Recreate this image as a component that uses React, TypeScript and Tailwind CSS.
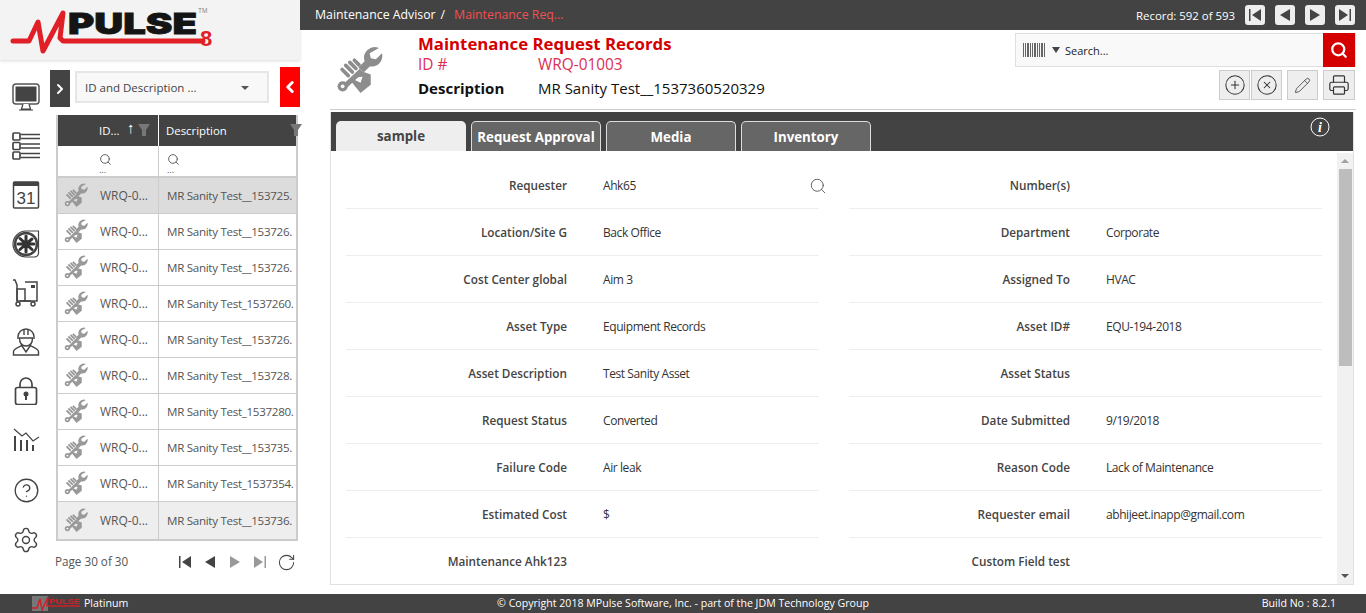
import { ChevronLeft, ChevronRight, CirclePlus, CircleX, CircleHelp, Pencil, Printer, RotateCw, Search, Settings } from 'lucide-react';

const font = { fontFamily: '"Open Sans", sans-serif' };

const listRows = [
  { id: 'WRQ-0...', desc: 'MR Sanity Test__153725.', bg: 'bg-[#dcdcdc]' },
  { id: 'WRQ-0...', desc: 'MR Sanity Test__153726.', bg: 'bg-white' },
  { id: 'WRQ-0...', desc: 'MR Sanity Test__153726.', bg: 'bg-white' },
  { id: 'WRQ-0...', desc: 'MR Sanity Test_1537260.', bg: 'bg-white' },
  { id: 'WRQ-0...', desc: 'MR Sanity Test__153726.', bg: 'bg-white' },
  { id: 'WRQ-0...', desc: 'MR Sanity Test__153728.', bg: 'bg-white' },
  { id: 'WRQ-0...', desc: 'MR Sanity Test_1537280.', bg: 'bg-white' },
  { id: 'WRQ-0...', desc: 'MR Sanity Test__153735.', bg: 'bg-white' },
  { id: 'WRQ-0...', desc: 'MR Sanity Test_1537354.', bg: 'bg-white' },
  { id: 'WRQ-0...', desc: 'MR Sanity Test__153736.', bg: 'bg-[#eeeeee]' },
];

const formRows = [
  ['Requester', 'Ahk65', 'Number(s)', ''],
  ['Location/Site G', 'Back Office', 'Department', 'Corporate'],
  ['Cost Center global', 'Aim 3', 'Assigned To', 'HVAC'],
  ['Asset Type', 'Equipment Records', 'Asset ID#', 'EQU-194-2018'],
  ['Asset Description', 'Test Sanity Asset', 'Asset Status', ''],
  ['Request Status', 'Converted', 'Date Submitted', '9/19/2018'],
  ['Failure Code', 'Air leak', 'Reason Code', 'Lack of Maintenance'],
  ['Estimated Cost', '$', 'Requester email', 'abhijeet.inapp@gmail.com'],
  ['Maintenance Ahk123', '', 'Custom Field test', ''],
];

// fist gripping a wrench, same mark in the list rows and the record header
function Wrench({ className }: { className?: string }) {
  return (
    <svg viewBox="0 0 46 46" className={className} fill="currentColor">
      <path d="M42 2a10.500 10.500 0 0 0-14 13L22 21l5 5 6-6a10.500 10.500 0 0 0 12-13l-6 6-5-1-1-5z" />
      <path d="M25 24L9 39" stroke="currentColor" strokeWidth="5" />
      <circle cx="6.500" cy="39.500" r="5" />
      <circle cx="6.500" cy="39.500" r="1.800" fill="#fff" />
      <g stroke="currentColor" strokeWidth="3.600" strokeLinecap="round">
        <path d="M6 23l6 6M9.500 19l6.500 6.500M13.500 16l6 6M18 14l4.500 4.500" />
      </g>
      <path d="M16 31l7-7 11 4v10l-10 8-9-11 3-2 6 3 2-6z" />
    </svg>
  );
}

function Logo() {
  return (
    <svg viewBox="0 0 225 60" className="w-[225px] h-[60px]">
      <path d="M13 41h16l9-19 5 29 20-38-3 25 3 3h140" fill="none" stroke="#e01f26" strokeWidth="5" strokeLinecap="round" strokeLinejoin="round" />
      <text x="68" y="34" textLength="129" lengthAdjust="spacingAndGlyphs" fontFamily="Inter" fontWeight="900" fontSize="29" fill="#141414" stroke="#141414" strokeWidth="0.800">PULSE</text>
      <text x="198" y="13" fontFamily="Liberation Sans" fontSize="6.500" fill="#888">TM</text>
      <text x="200" y="46" fontFamily="Liberation Sans" fontWeight="700" fontSize="22" fill="#e01f26">8</text>
    </svg>
  );
}

function MonitorIcon() {
  return (
    <svg viewBox="0 0 28 28" className="w-7 h-7">
      <rect x="1" y="1" width="26" height="20" rx="3" fill="#fff" stroke="#555" strokeWidth="1.500" />
      <rect x="3.500" y="3.500" width="21" height="15" fill="#444" />
      <path d="M11 21l-1.500 5h9L17 21M7 27h14" fill="#fff" stroke="#444" strokeWidth="1.200" />
    </svg>
  );
}

function ListIcon() {
  return (
    <svg viewBox="0 0 28 28" className="w-7 h-7" fill="none" stroke="#444" strokeWidth="1.700">
      <rect x="1" y="1" width="7" height="7" rx="1" />
      <rect x="1" y="10.500" width="7" height="7" rx="1" />
      <rect x="1" y="20" width="7" height="7" rx="1" />
      <path d="M9 2.500h19M9 6.500h19M9 12h19M9 16h19M9 21.500h19M9 25.500h19" />
    </svg>
  );
}

function CalendarIcon() {
  return (
    <svg viewBox="0 0 28 28" className="w-7 h-7">
      <rect x="1.500" y="1" width="25" height="26" rx="1" fill="#fff" stroke="#444" strokeWidth="1.500" />
      <rect x="1.500" y="1" width="25" height="4" fill="#444" />
      <text x="14" y="23" textAnchor="middle" fontFamily="Liberation Sans" fontSize="17" fill="#444">31</text>
    </svg>
  );
}

function FanIcon() {
  return (
    <svg viewBox="0 0 28 28" className="w-7 h-7">
      <path d="M14 1h12.500v22a4 4 0 0 1-4 4H14a13 13 0 0 1 0-26z" fill="#fff" stroke="#444" strokeWidth="1.200" />
      <circle cx="14" cy="14" r="11" fill="#fff" stroke="#444" strokeWidth="2.500" />
      <g stroke="#333" strokeWidth="3" strokeLinecap="round">
        <path d="M14 14V6M14 14l6-5M14 14h8M14 14l6 5.500M14 14v8M14 14l-6 5.500M14 14H6M14 14L8 8.500" />
      </g>
    </svg>
  );
}

function CartIcon() {
  return (
    <svg viewBox="0 0 28 28" className="w-7 h-7" fill="none" stroke="#444" strokeWidth="1.500">
      <path d="M1 1h2l2 5v16" />
      <path d="M5 10h8v12H5z" />
      <path d="M13 3h12v19H13" />
      <rect x="19" y="6" width="4" height="3" fill="#444" stroke="none" />
      <circle cx="6" cy="25" r="2" />
      <circle cx="21" cy="25" r="2" />
      <path d="M8 22h11" />
    </svg>
  );
}

function WorkerIcon() {
  return (
    <svg viewBox="0 0 28 28" className="w-7 h-7" fill="none" stroke="#444" strokeWidth="1.400">
      <path d="M6 9a8 8 0 0 1 16 0M5 10h18M12 2v5M16 2v5" />
      <path d="M7.500 10c0 5 2.500 8 6.500 8s6.500-3 6.500-8" />
      <path d="M10 17c-1 2-8 3-8.500 6.500V27h25v-3.500C26 20 19 19 18 17M10 18l4 6 4-6" />
    </svg>
  );
}

function LockIcon() {
  return (
    <svg viewBox="0 0 28 28" className="w-7 h-7" fill="none" stroke="#444" strokeWidth="1.700">
      <path d="M8 11V7a6 6 0 0 1 12 0v4" />
      <rect x="3.500" y="10.500" width="21" height="17" rx="2" />
      <circle cx="14" cy="17" r="2.500" fill="#444" stroke="none" />
      <rect x="13" y="18" width="2" height="5" fill="#444" stroke="none" />
    </svg>
  );
}

function TrendIcon() {
  return (
    <svg viewBox="0 0 28 28" className="w-7 h-7" fill="none" stroke="#444">
      <path d="M2 3l8 7 4-3 7 8 6-4" strokeWidth="1.200" />
      <path d="M3 10v15M9 14v11M15 14v11M21 19v6" strokeWidth="2" />
    </svg>
  );
}

function PagerIcon({ dir, bar, color }: { dir: 'left' | 'right'; bar?: boolean; color: string }) {
  return (
    <svg viewBox="0 0 14 14" className="w-[14px] h-[14px]" fill={color}>
      {dir === 'left'
        ? <path d={bar ? 'M13 1v12L4 7z' : 'M12 1v12L2 7z'} />
        : <path d={bar ? 'M1 1v12l9-6z' : 'M2 1v12l10-6z'} />}
      {bar && (dir === 'left' ? <rect x="1" y="1" width="1.500" height="12" /> : <rect x="11.500" y="1" width="1.500" height="12" />)}
    </svg>
  );
}

function RecordButton({ dir, bar }: { dir: 'left' | 'right'; bar?: boolean }) {
  return (
    <div className="w-5 h-5 bg-[#eeeeee] rounded-[3px] flex items-center justify-center">
      <PagerIcon dir={dir} bar={bar} color="#444" />
    </div>
  );
}

function ActionButton({ children, className }: { children: React.ReactNode; className?: string }) {
  return (
    <div className={`w-[31px] h-[30px] bg-[#eeeeee] border border-[#cccccc] flex items-center justify-center text-[#333] ${className ?? ''}`}>
      {children}
    </div>
  );
}

function FormCell({ label, value, search }: { label: string; value: string; search?: boolean }) {
  return (
    <div className="relative flex items-center h-[47px] border-b border-[#eeeeee] pt-[2px]">
      <div className="w-[221px] text-right text-[11.75px] font-semibold text-[#444]">{label}</div>
      <div className="ml-[36px] text-[12px] tracking-[-0.42px] text-[#333]">{value}</div>
      {search && <Search className="absolute right-[-8px] top-[15px] text-[#555]" size={18} strokeWidth={1.200} />}
    </div>
  );
}

function Tab({ label, active }: { label: string; active?: boolean }) {
  return (
    <div className={`w-[130px] h-[30px] pt-[2px] rounded-t-[5px] flex items-center justify-center text-[13.3px] font-bold ${active ? 'bg-[#eeeeee] text-[#444]' : 'bg-[#666666] text-white border border-b-0 border-[#dddddd]'}`}>
      {label}
    </div>
  );
}

export default function App() {
  const navIcons = [<MonitorIcon />, <ListIcon />, <CalendarIcon />, <FanIcon />, <CartIcon />, <WorkerIcon />, <LockIcon />, <TrendIcon />];

  return (
    <div className="w-[1366px] h-[613px] flex flex-col overflow-hidden bg-white" style={font}>
      <div className="flex flex-1 min-h-0">
        {/* Left sidebar */}
        <aside className="w-[300px] shrink-0 flex flex-col">
          <div className="h-[60px] bg-[#f3f3f3] shadow-[0_1px_3px_rgba(0,0,0,0.15)]">
            <Logo />
          </div>
          <div className="flex flex-1 min-h-0">
            <nav className="w-[50px] pt-[12px] flex flex-col items-center pl-[2px]">
              {navIcons.map((icon, i) => (
                <div key={i} className="h-[49px] flex items-center justify-center">{icon}</div>
              ))}
              <div className="mt-[2px] h-[49px] flex items-center justify-center text-[#444]"><CircleHelp size={27} strokeWidth={1.200} /></div>
              <div className="h-[49px] flex items-center justify-center text-[#444]"><Settings size={28} strokeWidth={1.200} /></div>
            </nav>
            <div className="flex-1 min-w-0">
              <div className="flex h-[47px] items-start">
                <div className="mt-[10px] w-[20px] h-[37px] bg-[#434343] flex items-center justify-center text-white">
                  <ChevronRight size={16} strokeWidth={3} />
                </div>
                <div className="mt-[11px] ml-[5px] w-[194px] h-[32px] bg-[#f8f8f8] border-2 border-[#e6e6e6] flex items-center justify-between pl-[8px] pr-[18px] pt-[1px] text-[11.5px] text-[#444]">
                  <span>ID and Description ...</span>
                  <span className="w-0 h-0 border-x-[4px] border-x-transparent border-t-[4px] border-t-[#555]" />
                </div>
                <div className="mt-[7px] ml-auto w-[20px] h-[40px] bg-[#ff0000] flex items-center justify-center text-white">
                  <ChevronLeft size={18} strokeWidth={4} />
                </div>
              </div>
              {/* Record list */}
              <div className="mt-[8px] ml-[6px] w-[242px] border-2 border-[#cccccc] border-t-0 bg-white">
                <div className="flex h-[31px] bg-[#434343] text-white text-[11.4px]">
                  <div className="w-[101px] relative border-r border-white flex items-center pl-[41px]">
                    <span>ID...</span>
                    <span className="absolute left-[69px] top-[5px] text-[15px] font-bold leading-none">↑</span>
                    <svg viewBox="0 0 12 12" className="absolute left-[80px] top-[9px] w-3 h-3" fill="#777"><path d="M0 0h12L8 6v6H4V6z" /></svg>
                  </div>
                  <div className="flex-1 relative flex items-center pl-[7px]">
                    <span>Description</span>
                    <svg viewBox="0 0 12 12" className="absolute right-[-6px] top-[9px] w-3 h-3" fill="#777"><path d="M0 0h12L8 6v6H4V6z" /></svg>
                  </div>
                </div>
                <div className="flex h-[32px] border-b-2 border-[#cccccc] text-[#555]">
                  <div className="w-[101px] border-r border-[#cccccc] pl-[41px] pt-[7px]">
                    <Search size={13} strokeWidth={1.700} />
                    <div className="text-[9px] leading-[8px]">...</div>
                  </div>
                  <div className="flex-1 pl-[8px] pt-[7px]">
                    <Search size={13} strokeWidth={1.700} />
                    <div className="text-[9px] leading-[8px]">...</div>
                  </div>
                </div>
                {listRows.map((row, i) => (
                  <div key={i} className={`flex h-[36px] last:h-[37px] border-b border-[#cccccc] last:border-b-0 ${row.bg}`}>
                    <div className="w-[101px] shrink-0 border-r border-[#cccccc] flex items-center pl-[6px] text-[12px] text-[#555]">
                      <Wrench className="w-[24px] h-[24px] mb-[2px] text-[#999999]" />
                      <span className="ml-[12px]">{row.id}</span>
                    </div>
                    <div className="flex-1 min-w-0 flex items-center pl-[8px] text-[11.6px] tracking-[-0.3px] text-[#555] whitespace-nowrap">{row.desc}</div>
                  </div>
                ))}
              </div>
              <div className="ml-[5px] mt-[10px] flex items-center h-[22px] text-[11.7px] text-[#555]">
                <span>Page 30 of 30</span>
                <div className="ml-[50px] flex items-center gap-[11px]">
                  <PagerIcon dir="left" bar color="#444" />
                  <PagerIcon dir="left" color="#444" />
                  <PagerIcon dir="right" color="#999" />
                  <PagerIcon dir="right" bar color="#999" />
                </div>
                <RotateCw className="ml-[10px] text-[#444]" size={19} strokeWidth={1.300} />
              </div>
            </div>
          </div>
        </aside>

        {/* Main */}
        <main className="flex-1 min-w-0 flex flex-col">
          <div className="h-[30px] bg-[#434343] flex items-center justify-between pl-[15px] pr-[11px] text-[12.3px]">
            <div className="flex items-center pt-[1px]">
              <span className="text-white">Maintenance Advisor</span>
              <span className="text-white ml-[5px]">/</span>
              <span className="text-[#f05050] ml-[9px]">Maintenance Req...</span>
            </div>
            <div className="flex items-center gap-[10px] text-white">
              <span className="text-[11.4px] pt-[1px]">Record: 592 of 593</span>
              <RecordButton dir="left" bar />
              <RecordButton dir="left" />
              <RecordButton dir="right" />
              <RecordButton dir="right" bar />
            </div>
          </div>

          <div className="ml-[30px] mr-[10px] h-[80px] border-b border-[#cccccc] flex justify-between">
            <div className="flex">
              <Wrench className="ml-[6px] mt-[16px] w-[47px] h-[47px] text-[#8d8d8d]" />
              <div className="ml-[35px] pt-[2px]">
                <div className="text-[16.8px] font-bold text-[#d40000] leading-[23px]">Maintenance Request Records</div>
                <div className="flex text-[15.4px] text-[#dc2f55] leading-[19px]">
                  <span className="w-[120px]">ID #</span>
                  <span>WRQ-01003</span>
                </div>
                <div className="flex items-center text-[15px] text-[#111] leading-[20px] mt-[4px]">
                  <span className="w-[120px] font-bold">Description</span>
                  <span>MR Sanity Test__1537360520329</span>
                </div>
              </div>
            </div>
            <div className="w-[341px] pt-[3px] flex flex-col items-end">
              <div className="w-full h-[34px] bg-[#f9f9f9] border border-[#e0e0e0] flex items-center">
                <div className="ml-[7px] flex h-[14px] gap-[1px]">
                  {[1, 1, 2, 1, 1, 2, 1, 1, 2, 1].map((w, i) => (
                    <span key={i} className="bg-[#666]" style={{ width: w }} />
                  ))}
                </div>
                <span className="ml-[7px] w-0 h-0 border-x-[4px] border-x-transparent border-t-[6px] border-t-[#444]" />
                <span className="ml-[5px] pt-[2px] text-[11px] text-[#222]">Search...</span>
                <div className="ml-auto w-[32px] h-[34px] bg-[#d40000] flex items-center justify-center text-white">
                  <Search size={18} strokeWidth={3} />
                </div>
              </div>
              <div className="mt-[3px] flex mr-[1px]">
                <ActionButton><CirclePlus size={22} strokeWidth={1.100} /></ActionButton>
                <ActionButton className="ml-[1px]"><CircleX size={22} strokeWidth={1.100} /></ActionButton>
                <ActionButton className="ml-[5px]"><Pencil size={17} strokeWidth={1.100} /></ActionButton>
                <ActionButton className="ml-[5px] w-[32px]"><Printer size={22} strokeWidth={1.300} /></ActionButton>
              </div>
            </div>
          </div>

          {/* Record panel */}
          <div className="ml-[30px] mr-[12px] mt-[2px] h-[473px] border-r border-b border-l border-[#e0e0e0] flex flex-col">
            <div className="h-[39px] shrink-0 bg-[#434343] flex items-end pl-[5px] gap-[5px] relative">
              <Tab label="sample" active />
              <Tab label="Request Approval" />
              <Tab label="Media" />
              <Tab label="Inventory" />
              <svg viewBox="0 0 20 20" className="absolute right-[23px] top-[5px] w-5 h-5" fill="none" stroke="#fff" strokeWidth="1">
                <circle cx="10" cy="10" r="9" />
                <text x="10" y="15" textAnchor="middle" fontFamily="Liberation Serif" fontStyle="italic" fontWeight="700" fontSize="14" fill="#fff" stroke="none">i</text>
              </svg>
            </div>
            <div className="flex-1 min-h-0 flex overflow-hidden">
              <div className="flex-1 pl-[15px] pt-[11px] overflow-hidden">
                <div className="grid grid-cols-[473px_473px] gap-x-[30px]">
                  {formRows.map((r, i) => [
                    <FormCell key={`l${i}`} label={r[0]} value={r[1]} search={i === 0} />,
                    <FormCell key={`r${i}`} label={r[2]} value={r[3]} />,
                  ])}
                </div>
              </div>
              <div className="w-[16px] shrink-0 mt-[2px] bg-[#f1f1f1] flex flex-col items-center relative">
                <span className="mt-[6px] w-0 h-0 border-x-[4px] border-x-transparent border-b-[4px] border-b-[#a0a0a0]" />
                <div className="mt-[6px] w-[13px] h-[197px] bg-[#bdbdbd]" />
                <span className="absolute bottom-[6px] w-0 h-0 border-x-[4px] border-x-transparent border-t-[4px] border-t-[#555]" />
              </div>
            </div>
          </div>
        </main>
      </div>

      {/* Footer */}
      <footer className="h-[19px] shrink-0 bg-[#434343] grid grid-cols-3 items-center text-white text-[10.6px]">
        <div className="flex items-center pl-[32px]">
          <svg viewBox="0 0 48 15" className="w-[48px] h-[15px]">
            <rect x="0" y="0" width="16" height="15" fill="#777" />
            <path d="M0 12h5l3-9 2 11 6-13-1 9h33" fill="none" stroke="#d0202a" strokeWidth="1.500" />
            <text x="17" y="8" textLength="31" lengthAdjust="spacingAndGlyphs" fontFamily="Liberation Sans" fontWeight="700" fontSize="7" fill="#d0202a">PULSE</text>
          </svg>
          <span className="ml-[4px]">Platinum</span>
        </div>
        <div className="text-center whitespace-nowrap">© Copyright 2018 MPulse Software, Inc. - part of the JDM Technology Group</div>
        <div className="text-right pr-[30px]">Build No : 8.2.1</div>
      </footer>
    </div>
  );
}
